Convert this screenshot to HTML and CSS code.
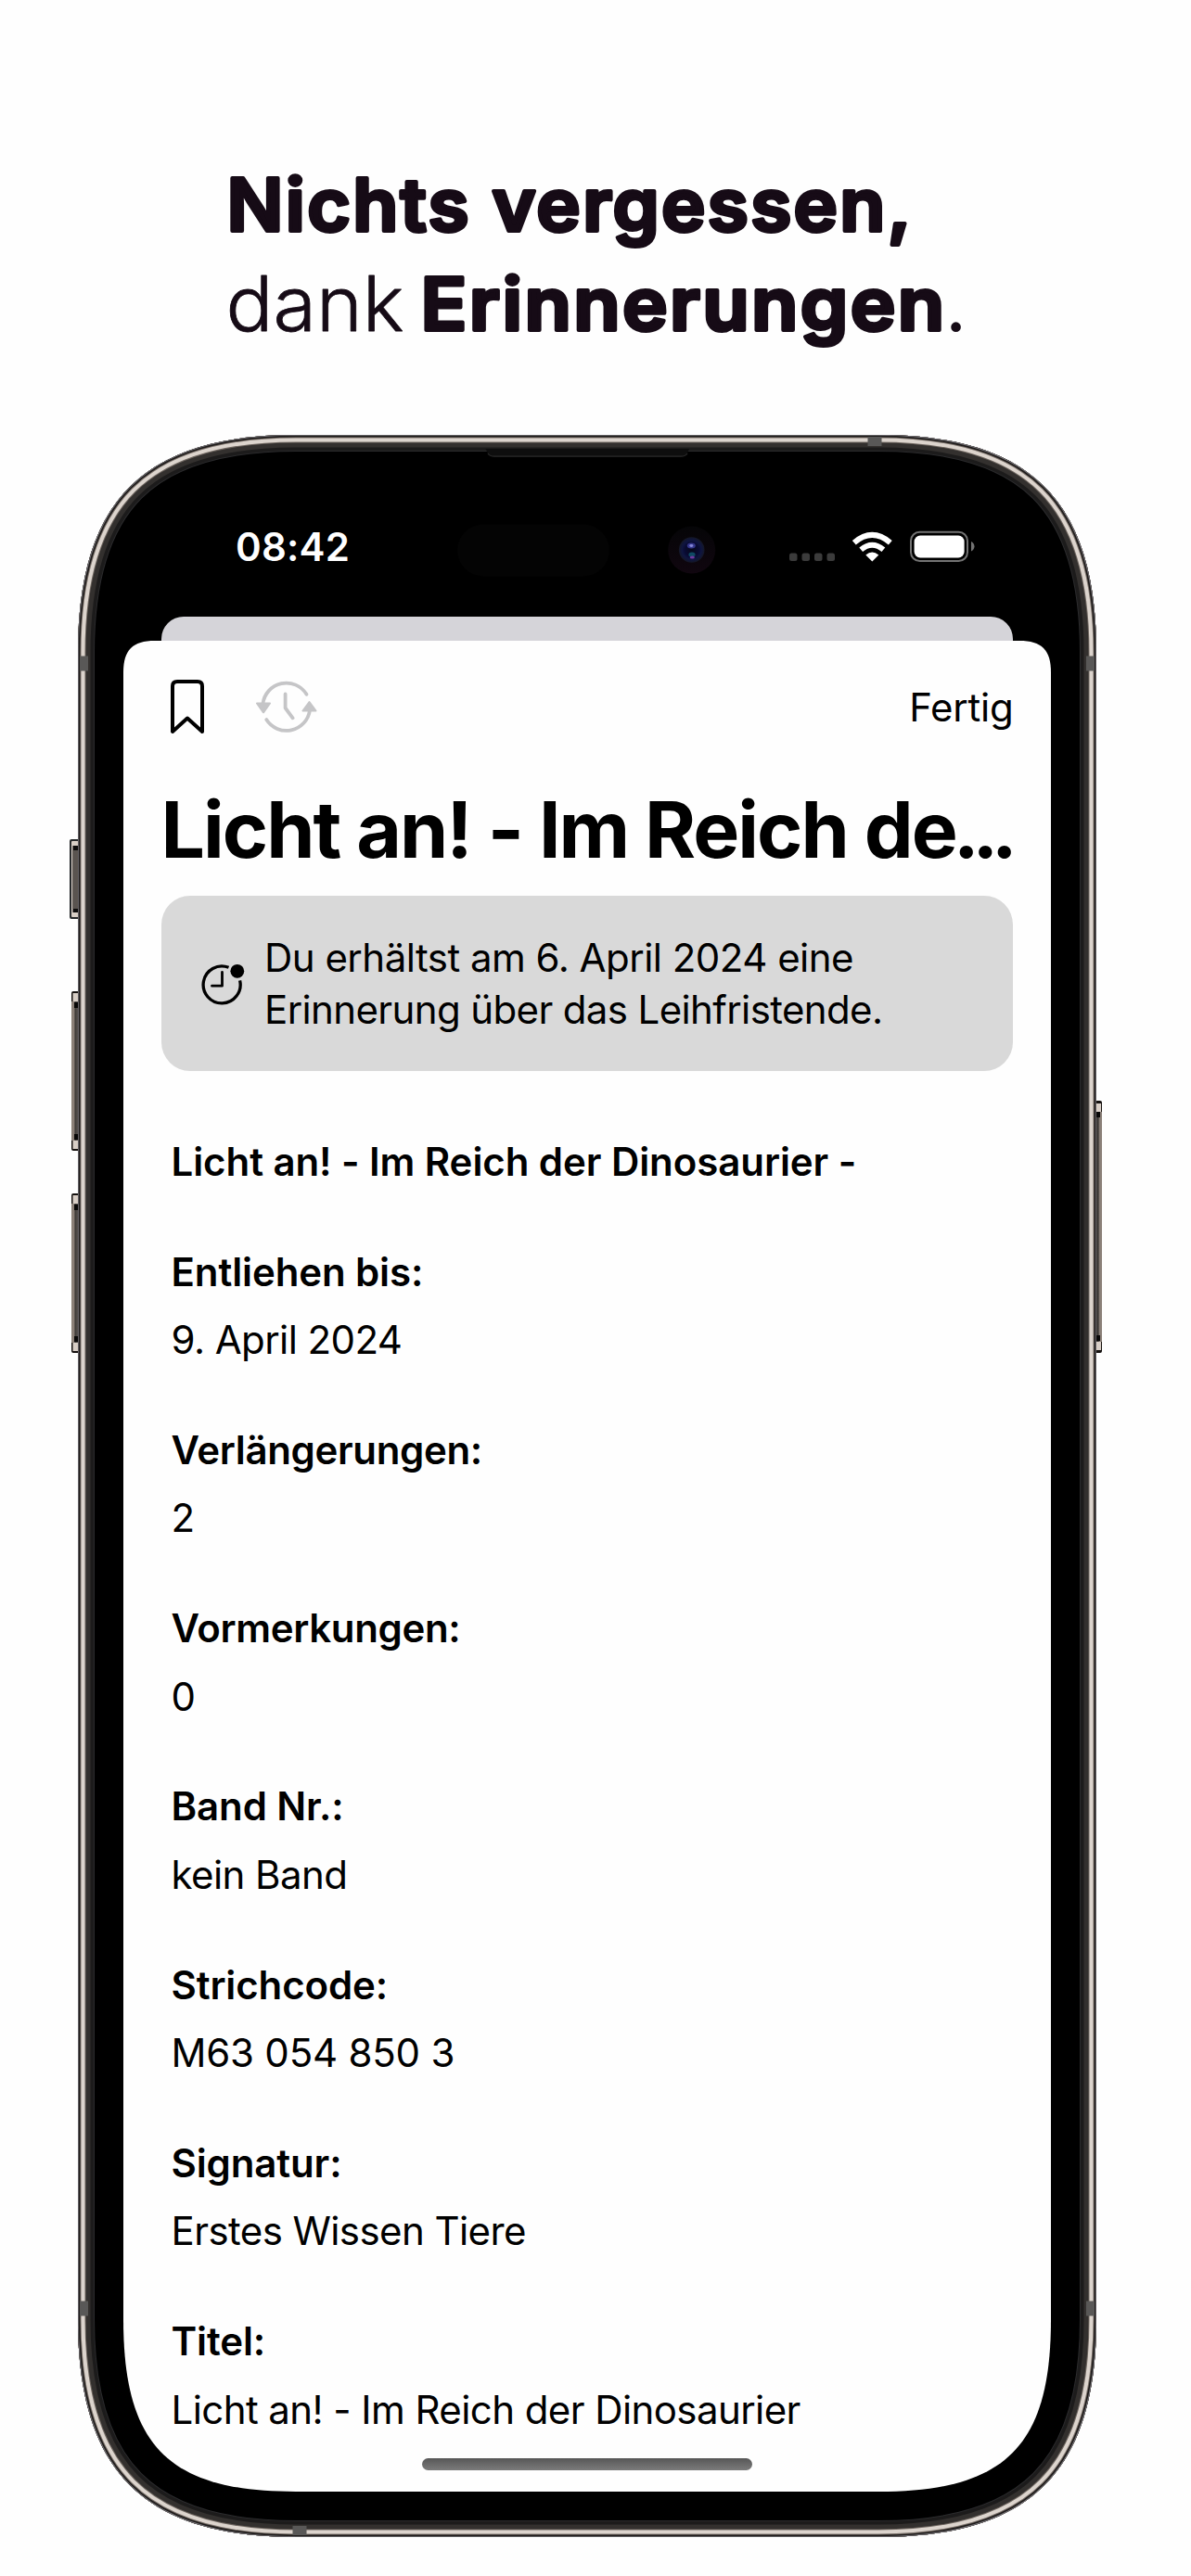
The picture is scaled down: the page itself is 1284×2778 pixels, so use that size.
FILE: index.html
```html
<!DOCTYPE html>
<html lang="de">
<head>
<meta charset="utf-8">
<title>Erinnerungen</title>
<link rel="stylesheet" href="styles.css">
</head>
<body>
<div class="page">
  <header class="promo">
    <h1 class="claim">
      <svg class="claim-text" width="1284" height="469" viewBox="0 0 1284 469">
        <text class="strong" x="244.6" y="249" textLength="740" lengthAdjust="spacingAndGlyphs">Nichts vergessen,</text>
        <text class="light" x="243.6" y="357.4" textLength="192" lengthAdjust="spacingAndGlyphs">dank</text>
        <text class="strong" x="453.5" y="356" textLength="567" lengthAdjust="spacingAndGlyphs">Erinnerungen</text>
        <text class="light dot" x="1019" y="357.4">.</text>
      </svg>
    </h1>
  </header>

  <main class="phone">
    <svg class="frame" width="1118" height="2287" viewBox="74 459 1118 2287">
      <defs>
        <path id="body" d="M84 704C84 540 155 469 319 469H947C1111 469 1182 540 1182 704V2501C1182 2665 1111 2736 947 2736H319C155 2736 84 2665 84 2501Z"/>
        <clipPath id="bodyClip"><use href="#body"/></clipPath>
        <linearGradient id="key" x1="0" x2="1" y1="0" y2="0">
          <stop offset="0" stop-color="#8b8078"/><stop offset=".3" stop-color="#8b8078"/><stop offset=".45" stop-color="#3c3836"/><stop offset=".7" stop-color="#55504d"/><stop offset="1" stop-color="#1c1a19"/>
        </linearGradient>
        <linearGradient id="keyRight" x1="1" x2="0" y1="0" y2="0">
          <stop offset="0" stop-color="#8b8078"/><stop offset=".3" stop-color="#8b8078"/><stop offset=".5" stop-color="#3c3836"/><stop offset="1" stop-color="#4b4744"/>
        </linearGradient>
        <radialGradient id="lens">
          <stop offset="0" stop-color="#07071a"/><stop offset=".55" stop-color="#090b33"/><stop offset=".75" stop-color="#0f1540"/><stop offset="1" stop-color="#141726"/>
        </radialGradient>
        <linearGradient id="ring" x1="0" x2="0" y1="0" y2="1">
          <stop offset="0" stop-color="#050507"/><stop offset="1" stop-color="#10060f"/>
        </linearGradient>
        <g id="volume">
          <rect x="77" y="0" width="9" height="172" rx="2" fill="#15110f"/>
          <rect x="78.500" y="2" width="6" height="9" fill="#d8cec6"/>
          <rect x="78.500" y="161" width="6" height="9" fill="#d8cec6"/>
          <rect x="77" y="11" width="9" height="150" fill="url(#key)"/>
          <rect x="80" y="12" width="5" height="6" fill="#080707"/>
          <rect x="80" y="154" width="5" height="6" fill="#080707"/>
        </g>
      </defs>

      <!-- side keys -->
      <g>
        <rect x="75" y="905" width="12" height="86" rx="2" fill="#26292b"/>
        <rect x="77" y="907" width="10" height="82" rx="1" fill="#d8cec6"/>
        <rect x="78.500" y="912" width="8" height="72" fill="#0c0b0b"/>
        <rect x="78.500" y="917" width="7" height="63" fill="#5a5450"/>
        <use href="#volume" y="1069"/>
        <use href="#volume" y="1287"/>
        <rect x="1179" y="1187" width="9" height="272" rx="2" fill="#15110f"/>
        <rect x="1182" y="1190" width="5" height="10" fill="#d8cec6"/>
        <rect x="1182" y="1446" width="5" height="10" fill="#d8cec6"/>
        <rect x="1180" y="1199" width="8" height="248" fill="url(#keyRight)"/>
        <rect x="1181" y="1199" width="5" height="6" fill="#080707"/>
        <rect x="1181" y="1440" width="5" height="6" fill="#080707"/>
      </g>

      <!-- metal edge, from the innermost band outwards -->
      <g clip-path="url(#bodyClip)">
        <use href="#body" fill="#000"/>
        <g fill="none">
          <use href="#body" stroke="#2b2b2d" stroke-width="36"/>
          <use href="#body" stroke="#1c1b1b" stroke-width="34"/>
          <use href="#body" stroke="#33302e" stroke-width="27"/>
          <use href="#body" stroke="#6e6660" stroke-width="17"/>
          <use href="#body" stroke="#dcd4cd" stroke-width="15"/>
          <use href="#body" stroke="#7a716b" stroke-width="7"/>
          <use href="#body" stroke="#1f1c1b" stroke-width="5"/>
          <use href="#body" stroke="#77757a" stroke-width="1.600"/>
        </g>
        <g fill="#595857">
          <rect x="86" y="707.500" width="9" height="16"/>
          <rect x="1171" y="707.500" width="9" height="16"/>
          <rect x="86" y="2481.500" width="9" height="16"/>
          <rect x="1171" y="2481.500" width="9" height="16"/>
          <rect x="935.500" y="471" width="15" height="10"/>
          <rect x="315.500" y="2724" width="15" height="10"/>
        </g>
      </g>

      <path d="M523.500 484H743L741 489Q739 492.500 734 492.500H533Q528 492.500 526 489Z" fill="#0e0e0e"/>
      <path d="M526 489Q528 492.200 533 492.200H734Q739 492.200 741 489" fill="none" stroke="#2a2a2a" stroke-width="1.200"/>
      <rect x="493" y="565.500" width="164" height="56" rx="28" fill="#040404"/>
      <circle cx="745.700" cy="593" r="25.500" fill="url(#ring)"/>
      <circle cx="745.700" cy="593" r="13.800" fill="url(#lens)"/>
      <ellipse cx="745.300" cy="588.500" rx="4.500" ry="3" fill="#34368a"/>
      <ellipse cx="745.300" cy="588.500" rx="2" ry="1.400" fill="#8486d8"/>
      <ellipse cx="746" cy="598" rx="3.600" ry="2.600" fill="#0e4a62"/>
      <ellipse cx="746.300" cy="601" rx="2.600" ry="1.500" fill="#7038a0"/>
    </svg>

    <div class="status">
      <span class="time">08:42</span>
      <svg class="indicators" width="202" height="40" viewBox="850 570 202 40">
        <g fill="#3b3b3b">
          <rect x="851" y="596.500" width="8.500" height="8.500" rx="2.500"/>
          <rect x="864.500" y="596.500" width="8.500" height="8.500" rx="2.500"/>
          <rect x="878" y="596.500" width="8.500" height="8.500" rx="2.500"/>
          <rect x="891.500" y="596.500" width="8.500" height="8.500" rx="2.500"/>
        </g>
        <path d="M940.300 605.500L933.300 598.400Q940.300 592.500 947.300 598.400Z" fill="#fff"/>
        <path d="M928.200 592.800Q940.300 582.600 952.400 592.800" fill="none" stroke="#fff" stroke-width="5.800"/>
        <path d="M920.800 585.200Q940.300 568.600 959.800 585.200" fill="none" stroke="#fff" stroke-width="6"/>
        <rect x="982" y="573.700" width="61" height="31.400" rx="9.500" fill="none" stroke="#737373" stroke-width="2"/>
        <rect x="985.600" y="577.500" width="54" height="24" rx="6.500" fill="#fff"/>
        <path d="M1047 584Q1050.500 586 1050.500 589.300T1047 594.600Z" fill="#737373"/>
      </svg>
    </div>

    <div class="sheet-behind"></div>

    <section class="sheet">
      <nav class="toolbar">
        <svg class="bookmark" width="38" height="62" viewBox="183 731 38 62">
          <path d="M186 789V740Q186 735 191 735H213Q218 735 218 740V789L202 774.500Z" fill="none" stroke="#000" stroke-width="4" stroke-linejoin="round"/>
        </svg>
        <svg class="renew" width="70" height="62" viewBox="274 732 70 62">
          <g fill="none" stroke="#c5c5c7" stroke-width="3.800" stroke-linecap="round" stroke-linejoin="round">
            <path d="M283.400 759A25.500 25.500 0 0 1 330.500 748.800"/>
            <path d="M287.200 776A25.500 25.500 0 0 0 334 766"/>
            <path d="M307.600 748.500V763.500L315.600 774.300"/>
          </g>
          <g fill="#c5c5c7" stroke="#c5c5c7" stroke-width="2" stroke-linejoin="round">
            <path d="M277 758.500H291L284 768.300Z"/>
            <path d="M326.500 766.500H340.500L333.500 757Z"/>
          </g>
        </svg>
        <span class="done">Fertig</span>
      </nav>

      <h2 class="title">Licht an! - Im Reich de<span class="more">...</span></h2>

      <div class="notice">
        <svg class="clock" width="50" height="50" viewBox="215 1037 50 50">
          <path d="M246.500 1043.300A20 20 0 1 0 258.600 1057.300" fill="none" stroke="#000" stroke-width="3.300"/>
          <path d="M239.500 1048.500V1063.200H228.500" fill="none" stroke="#000" stroke-width="2.800" stroke-linecap="round" stroke-linejoin="round"/>
          <circle cx="255.800" cy="1047.300" r="7.400"/>
        </svg>
        <p class="notice-text"><span class="l1">Du erhältst am 6. April 2024 eine</span><br><span class="l2">Erinnerung über das Leihfristende.</span></p>
      </div>

      <div class="details">
        <h3 class="label lead">Licht an! - Im Reich der Dinosaurier -</h3>
        <div class="entry"><div class="label">Entliehen bis:</div><div class="value">9. April 2024</div></div>
        <div class="entry"><div class="label tight">Verlängerungen:</div><div class="value">2</div></div>
        <div class="entry"><div class="label tight">Vormerkungen:</div><div class="value">0</div></div>
        <div class="entry"><div class="label">Band Nr.:</div><div class="value">kein Band</div></div>
        <div class="entry"><div class="label">Strichcode:</div><div class="value digits">M63 054 850 3</div></div>
        <div class="entry"><div class="label">Signatur:</div><div class="value">Erstes Wissen Tiere</div></div>
        <div class="entry"><div class="label">Titel:</div><div class="value">Licht an! - Im Reich der Dinosaurier</div></div>
      </div>

      <div class="home-bar"></div>
    </section>
  </main>
</div>
</body>
</html>
```
FILE: styles.css
```css
* { box-sizing: border-box; margin: 0; padding: 0; }

body {
  background: #fefefe;
  color: #000;
  font-family: Inter, "Liberation Sans", sans-serif;
}

.page {
  width: 1284px;
  height: 2778px;
  overflow: hidden;
  display: flex;
  flex-direction: column;
}

.promo { height: 469px; flex: none; }
.claim { font-size: 78px; }
.claim-text { display: block; }
.strong {
  font-size: 78px;
  font-weight: 600;
  letter-spacing: 2.2px;
  fill: #160b16;
  stroke: #160b16;
  stroke-width: 4px;
  stroke-linejoin: round;
}
.light {
  font-size: 82px;
  font-weight: 300;
  fill: #160b16;
  stroke: #160b16;
  stroke-width: 0.8px;
  stroke-linejoin: round;
}
.dot { stroke-width: 2px; }

.phone {
  position: relative;
  width: 1098px;
  height: 2267px;
  flex: none;
  margin-left: 84px;
  padding: 0 49px;
  display: flex;
  flex-direction: column;
}
.frame { position: absolute; left: -10px; top: -10px; }

.status {
  position: relative;
  height: 196px;
  padding: 90.7px 81px 0 121px;
  display: flex;
  justify-content: space-between;
  align-items: flex-start;
}
.time {
  font-size: 42px;
  font-weight: 600;
  line-height: 60px;
  letter-spacing: 0.2px;
  color: #fff;
}
.indicators { margin-top: 10.3px; }

.sheet-behind {
  position: relative;
  height: 26px;
  margin: 0 41px;
  border-radius: 24px 24px 0 0;
  background: #d5d4d9;
}

.sheet {
  position: relative;
  height: 1996px;
  padding: 0 41px;
  background: #fefefe;
  clip-path: path("M0 34C0 10 10 0 34 0H966C990 0 1000 10 1000 34V1810C1000 1947 951 1996 814 1996H186C49 1996 0 1947 0 1810Z");
  display: flex;
  flex-direction: column;
}

.toolbar {
  height: 153.5px;
  padding: 40px 0 0 9px;
  display: flex;
  align-items: flex-start;
}
.renew { margin: 1px 0 0 53px; }
.done {
  margin: 2px -0.5px 0 auto;
  font-size: 42px;
  line-height: 60px;
  letter-spacing: -0.25px;
}

.title {
  height: 100px;
  margin-left: -0.5px;
  font-size: 84px;
  font-weight: 700;
  line-height: 100px;
  letter-spacing: -1.98px;
  white-space: nowrap;
}
.more { margin-left: -3px; letter-spacing: -7.6px; }

.notice {
  height: 189px;
  margin-top: 21.5px;
  padding: 1px 41px 0;
  display: flex;
  align-items: center;
  gap: 20px;
  border-radius: 31px;
  background: #d9d9d9;
}
.clock { margin-top: 2px; }
.notice-text { font-size: 42px; line-height: 56px; white-space: nowrap; }
.l1 { letter-spacing: -0.52px; }
.l2 { letter-spacing: -0.62px; }

.details {
  margin-top: 67.7px;
  padding-left: 10.5px;
  display: flex;
  flex-direction: column;
  gap: 58.9px;
}
.entry { display: flex; flex-direction: column; gap: 13.4px; }
.label {
  font-size: 42px;
  font-weight: 600;
  line-height: 60px;
  letter-spacing: -0.12px;
}
.lead { letter-spacing: -0.07px; }
.tight { letter-spacing: -0.34px; }
.value { font-size: 42px; line-height: 60px; letter-spacing: -0.58px; }
.digits { letter-spacing: -0.22px; }

.home-bar {
  width: 356px;
  height: 13px;
  margin: auto auto 23px;
  border-radius: 7px;
  background: linear-gradient(#575757, #7b7b7b);
}
```
